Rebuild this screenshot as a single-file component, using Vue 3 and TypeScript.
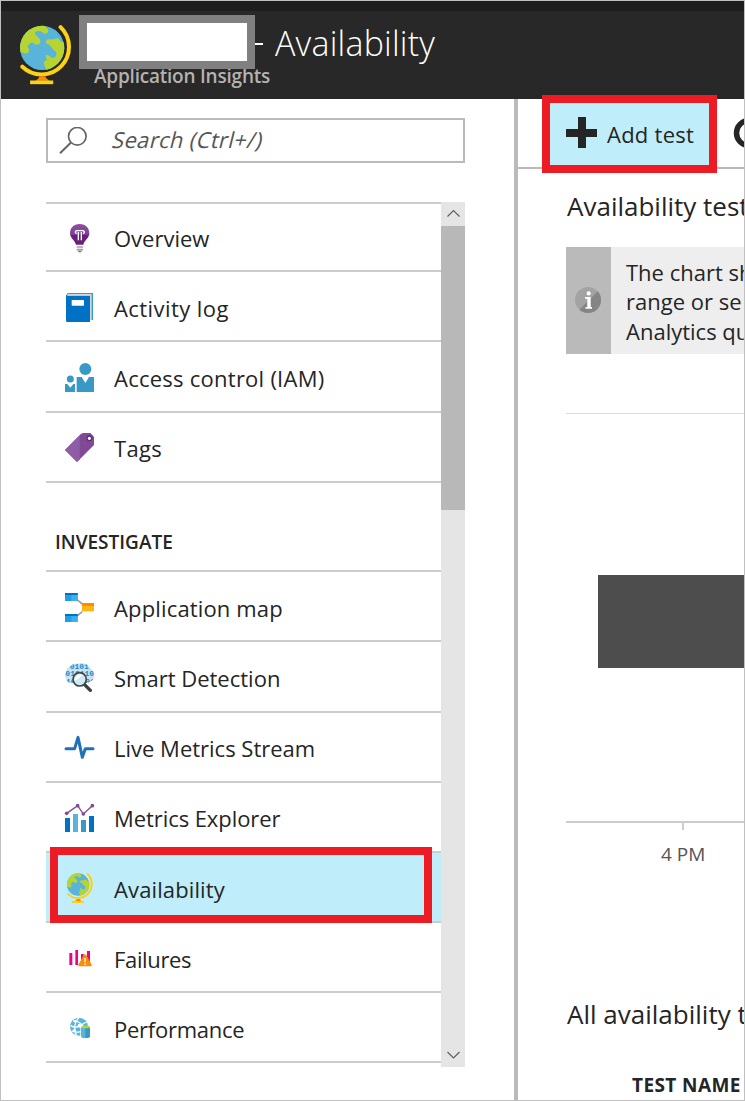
<script setup lang="ts">
interface Item {
  id: string
  label: string
  height: number
  top: number
  spacing: number
  active?: boolean
}

const general: Item[] = [
  { id: 'overview', label: 'Overview', height: 68, top: 19, spacing: 0 },
  { id: 'log', label: 'Activity log', height: 70, top: 21, spacing: 0.43 },
  { id: 'iam', label: 'Access control (IAM)', height: 71, top: 21, spacing: 0.25 },
  { id: 'tags', label: 'Tags', height: 70, top: 20, spacing: 0.3 },
]

const investigate: Item[] = [
  { id: 'map', label: 'Application map', height: 70, top: 21, spacing: 0.15 },
  { id: 'smart', label: 'Smart Detection', height: 71, top: 21, spacing: 0 },
  { id: 'live', label: 'Live Metrics Stream', height: 70, top: 20, spacing: 0 },
  { id: 'metrics', label: 'Metrics Explorer', height: 70, top: 20, spacing: -0.07 },
  { id: 'availability', label: 'Availability', height: 70, top: 21, spacing: 0.12, active: true },
  { id: 'failures', label: 'Failures', height: 70, top: 21, spacing: -0.35 },
  { id: 'performance', label: 'Performance', height: 70, top: 21, spacing: -0.25 },
]

const groups = [
  { title: '', items: general },
  { title: 'INVESTIGATE', items: investigate },
]
</script>

<template>
  <div class="window">
    <svg class="defs" width="0" height="0">
      <defs>
        <clipPath id="ball"><circle cx="126" cy="144" r="66" /></clipPath>
        <clipPath id="disc"><circle cx="13" cy="13" r="13" /></clipPath>
        <clipPath id="cloud"><path d="M17 9Q24-1 40 2q10-4 20 1 12 2 15 13 12 7 12 19 1 14-8 20-10 7-20 5H19Q5 60 3 47-3 37 3 26 5 14 17 9z" /></clipPath>
        <linearGradient id="bulb" x1="0" y1="0" x2="0" y2="1">
          <stop offset="0" stop-color="#8c4fa3" /><stop offset=".5" stop-color="#7f4196" /><stop offset=".55" stop-color="#68217a" /><stop offset="1" stop-color="#68217a" />
        </linearGradient>
        <symbol id="globe" viewBox="57 76 158 178">
          <circle cx="126" cy="144" r="66" fill="#59b4d9" />
          <g clip-path="url(#ball)" fill="#b8d432">
            <path d="M58 140 L58 75 H138 L136 81 Q146 88 144 96 Q140 105 131 101 L123 95 Q114 91 107 96 Q102 102 109 107 L118 116 Q123 123 119 130 Q112 138 104 132 L96 127 Q90 130 84 137 L82 140 Q89 148 86 156 Q81 163 72 160 L60 155Z" />
            <path d="M195 122 L185 127 Q180 124 176 117 Q170 113 162 118 H143 Q136 121 137 128 Q139 133 146 134 L158 147 L168 157 Q171 168 162 173 Q153 175 147 168 L141 164 Q134 167 138 174 L142 180 Q131 181 131 190 Q132 197 136 200 L139 220 L200 195Z" />
          </g>
          <path d="M181 82 A82 82 0 0 1 67 200" fill="none" stroke="#fcd116" stroke-width="12" stroke-linecap="round" />
          <path d="M118 228h17l4 7 9 7h-42l9-7z" fill="#ff8c00" />
          <path d="M90 241h69v11H90z" fill="#fcd116" />
        </symbol>
      </defs>
    </svg>

    <header class="header">
      <svg class="brand"><use href="#globe" /></svg>
      <div class="titles">
        <div class="title-row">
          <span class="redacted"></span>
          <span class="dash"></span>
          <h1>Availability</h1>
        </div>
        <p class="subtitle">Application Insights</p>
      </div>
    </header>

    <div class="body">
      <aside class="sidebar">
        <div class="search">
          <svg width="28" height="28" viewBox="0 0 28 28" fill="none" stroke="#666" stroke-width="1.7">
            <circle cx="18.3" cy="9.3" r="8.8" /><path d="M12 15.5 1 26.3" stroke-width="2" />
          </svg>
          <span>Search (Ctrl+/)</span>
        </div>

        <div class="menu">
          <nav class="list">
            <template v-for="group in groups" :key="group.title">
              <h2 v-if="group.title">{{ group.title }}</h2>
              <a
                v-for="item in group.items"
                :key="item.id"
                class="item"
                :class="{ active: item.active }"
                :style="{ height: item.height + 'px', paddingTop: item.top + 'px' }"
              >
                <svg class="icon" viewBox="0 0 90 90">
                  <g v-if="item.id === 'overview'">
                    <path d="M44 3C26 3 15 15 15 31c0 14 14 20 18 34h22c4-14 18-20 18-34C73 15 62 3 44 3z" fill="url(#bulb)" />
                    <path d="M40 52V27M49 52V27M35 32q-5-2-4-6 1-3 6-3h15q5 0 6 3 1 4-4 6" fill="none" stroke="#fff" stroke-width="4" />
                    <path d="M35 72h19M35 80h19" stroke="#a0a1a2" stroke-width="5" /><path d="M38 83h13l-3 5h-7z" fill="#7a7a7a" />
                  </g>
                  <g v-else-if="item.id === 'log'">
                    <path d="M8 0h76v81h-9V8H3z" fill="#3999c6" /><path d="M8 3h72v78h-5V8H6z" fill="#d5d6d8" />
                    <path d="M3 5q3 4 8 4h64v78H7q-4 0-4-4z" fill="#0072c6" /><rect x="20" y="21" width="37" height="17" rx="2" fill="#fff" />
                  </g>
                  <g v-else-if="item.id === 'iam'" fill="#3999c6">
                    <circle cx="61" cy="18" r="18" /><path d="M35 42h15l11 18 11-18h15v45H35z" />
                    <circle cx="16" cy="48" r="10.5" /><path d="M0 63h7l9 11 9-11h5v24H0z" />
                  </g>
                  <g v-else-if="item.id === 'tags'">
                    <path d="M0 51 47 4q4-4 10-4h19l11 11v25L36 87z" fill="#804998" /><path d="M0 51 44 7v72l-8 8z" fill="#8f5da5" />
                    <circle cx="73" cy="16" r="7" fill="#fff" stroke="#5b2d6e" stroke-width="4" />
                  </g>
                  <g v-else-if="item.id === 'map'">
                    <path d="m36 20 16 13M36 69l16-13" stroke="#a0a1a2" stroke-width="5" />
                    <path d="M0 0h38v24H0zM0 63h38v24H0z" fill="#1ba1e2" /><path d="M19 6h19v18H19zM19 70h19v17H19z" fill="#41afe6" />
                    <path d="M0 0h38v6H0zM0 63h38v6H0z" fill="#0072c6" /><path d="M51 30h36v25H51z" fill="#fdb515" /><path d="M51 30h36v9H51z" fill="#ff8c00" />
                  </g>
                  <g v-else-if="item.id === 'smart'">
                    <g clip-path="url(#cloud)">
                      <path d="M0 0h90v63H0z" fill="#c5e5f2" />
                      <g class="digits"><text x="14" y="17">0101</text><text x="1" y="40">010110</text><text x="3" y="63">101101</text></g>
                    </g>
                    <path d="m58 64 18 18" stroke="#3e3e3e" stroke-width="10" stroke-linecap="round" />
                    <circle cx="44" cy="49" r="20" fill="#cfe9f5" stroke="#464646" stroke-width="5" /><path d="M31 54A15 15 0 0 1 53 37z" fill="#fff" />
                  </g>
                  <path v-else-if="item.id === 'live'" d="M3 47h26L39 13l13 60 9-26h23" fill="none" stroke="#1f72b8" stroke-width="9" stroke-linecap="round" stroke-linejoin="round" />
                  <g v-else-if="item.id === 'metrics'">
                    <path d="M0 45h15v42H0zM72 39h15v48H72z" fill="#0072c6" /><path d="M24 33h15v54H24z" fill="#59b4d9" /><path d="M48 51h15v36H48z" fill="#3999c6" />
                    <path d="M5 31 38 8l17 25L82 8" fill="none" stroke="#804998" stroke-width="4" />
                    <g fill="#804998"><circle cx="5" cy="31" r="5.5" /><circle cx="38" cy="8" r="5.5" /><circle cx="55" cy="33" r="5.5" /><circle cx="82" cy="8" r="5.5" /></g>
                  </g>
                  <use v-else-if="item.id === 'availability'" href="#globe" x="4" y="-3" width="81" height="91" />
                  <g v-else-if="item.id === 'failures'">
                    <path d="M13 27h9v36h-9zM31 18h8v45h-8zM48 30h8v30h-8zM66 21h9v35h-9z" fill="#ec008c" />
                    <path d="M60 31q3 0 5 4l15 27q2 5-3 5H43q-5 0-3-5l15-27q2-4 5-4z" fill="#ff8c00" /><path d="M60 42v13M60 58v5" stroke="#fff" stroke-width="4" />
                  </g>
                  <g v-else>
                    <circle cx="42" cy="38" r="27" fill="#59b4d9" />
                    <path d="M17 35Q30 44 45 35T65 24M25 21q18-2 34 22M42 10Q21 33 34 64M20 51q24 9 47-5" fill="none" stroke="#fff" stroke-width="4" />
                    <circle cx="44" cy="35" r="6" fill="#fff" /><circle cx="28" cy="50" r="5" fill="#fff" /><circle cx="30" cy="22" r="4" fill="#fff" />
                    <path d="M46 36h31v38H50l-4-5z" fill="#fff" /><path d="M49 40h26v28q-1 4-13 4t-13-4z" fill="#3999c6" /><path d="M49 42h12v30q-11 0-12-4z" fill="#59b4d9" />
                    <ellipse cx="62" cy="39" rx="13" ry="4" fill="#b8d432" />
                  </g>
                </svg>
                <span class="label" :style="{ letterSpacing: item.spacing + 'px' }">{{ item.label }}</span>
                <i v-if="item.active" class="highlight"></i>
              </a>
            </template>
          </nav>
          <div class="scrollbar">
            <svg width="24" height="24" fill="none" stroke="#5e5e5e" stroke-width="1.2"><path d="m6.5 14.5 6-6 6 6" /></svg>
            <div class="thumb"></div>
            <svg width="24" height="24" fill="none" stroke="#5e5e5e" stroke-width="1.2"><path d="m6.5 9 6 6 6-6" /></svg>
          </div>
        </div>
      </aside>

      <main class="content">
        <div class="toolbar">
          <button class="add">
            <svg width="31" height="31" fill="#252525"><path d="M12 0h8v12h11v8H20v11h-8V20H0v-8h12z" /></svg>
            <span>Add test</span>
          </button>
          <svg class="refresh" width="31" height="34" fill="none" stroke="#252525" stroke-width="5.5"><circle cx="16" cy="17" r="12.5" /></svg>
        </div>
        <section class="panel">
          <h3 class="chart-title">Availability test</h3>
          <div class="info">
            <div class="info-mark">
              <svg width="26" height="26" viewBox="0 0 26 26">
                <g clip-path="url(#disc)"><path d="M0 0h26v26H0z" fill="#a3a3a3" /><path d="M26 1v25H1z" fill="#858585" /></g>
                <circle cx="13.7" cy="6.4" r="2.1" fill="#fff" /><path d="M10 10h5.7v10H17v1.8h-6.5V20h1.8v-8.3H10z" fill="#fff" />
              </svg>
            </div>
            <p>The chart sh<br />range or se<br />Analytics qu</p>
          </div>
          <div class="chart">
            <div class="bar"></div>
            <div class="axis"><i></i></div>
            <span class="tick-label">4 PM</span>
          </div>
          <h3 class="table-title">All availability t</h3>
          <div class="column">TEST NAME</div>
        </section>
      </main>
    </div>
  </div>
</template>

<style>
body { margin: 0; }
</style>

<style scoped>
* { box-sizing: border-box; }
.window {
  position: relative; width: 745px; height: 1101px; overflow: hidden;
  border: 1px solid #c0c0c0; background: #fff; color: #252525;
  font-family: "Open Sans", "Noto Sans", sans-serif; font-size: 22px;
}
.defs { position: absolute; }
h1, h2, h3, p { margin: 0; font-weight: 400; }
.header { display: flex; height: 98px; border-top: 10px solid #1d1d1d; background: #282828; }
.brand { width: 53px; height: 60px; margin: 14px 7px 0 18px; }
.titles { padding-top: 4px; }
.title-row { display: flex; position: relative; z-index: 1; height: 54px; }
.redacted { width: 176px; border: 8px solid #808080; background: #fff; }
.dash { width: 8px; height: 2px; margin: 28px 12px 0 0; background: #fff; }
h1 { height: 54px; line-height: 56px; font-size: 34px; font-weight: 300; letter-spacing: 0.2px; color: #fff; white-space: nowrap; }
.subtitle { margin: -8px 0 0 15px; line-height: 30px; font-size: 19px; font-weight: 600; letter-spacing: -0.22px; color: #b3b3b3; white-space: nowrap; }
.body { display: flex; height: 1001px; }
.sidebar { width: 517px; flex: none; padding: 19px 0 0 45px; border-right: 4px solid #bababa; }
.search { display: flex; align-items: center; width: 419px; height: 45px; padding-left: 11px; border: 2px solid #bababa; color: #555; white-space: nowrap; }
.search span { margin: -3px 0 0 26px; letter-spacing: 0.33px; transform: skewX(-14deg); }
.menu { display: flex; width: 419px; height: 865px; margin-top: 39px; }
.list { width: 395px; border-top: 2px solid #ccc; }
.list h2 { height: 89px; padding: 44px 0 0 9px; border-bottom: 2px solid #ccc; line-height: 30px; font-size: 19px; font-weight: 600; }
.item { display: flex; align-items: flex-start; position: relative; padding-left: 19px; border-bottom: 2px solid #ccc; }
.icon { width: 30px; height: 30px; flex: none; overflow: visible; }
.label { margin-left: 19px; line-height: 30px; white-space: nowrap; }
.active { background: #bfeefa; }
.highlight { position: absolute; left: 4px; top: -6px; width: 382px; height: 76px; border: 8px solid #ed1c24; }
.digits { font: bold 24px "Liberation Mono", monospace; fill: #2589c4; }
.scrollbar { display: flex; flex-direction: column; width: 24px; background: #e5e5e5; }
.scrollbar svg:last-child { margin-top: auto; }
.thumb { height: 284px; background: #b8b8b8; }
.content { flex: 1; min-width: 0; }
.toolbar { display: flex; height: 70px; border-bottom: 2px solid #bababa; }
.add {
  display: flex; flex: none; align-items: center; position: relative; width: 175px; height: 78px; margin: -4px 0 0 24px; padding: 0 0 0 16px;
  border: 8px solid #ed1c24; background: #bfeefa; color: #252525; font: inherit; white-space: nowrap;
}
.add svg { margin-top: -4px; }
.add span { margin-left: 10px; letter-spacing: 0.25px; }
.refresh { flex: none; margin: 17px 0 0 16px; }
.panel { padding-left: 48px; white-space: nowrap; }
.chart-title { height: 78px; padding: 17px 0 0 1px; line-height: 40px; font-size: 26px; }
.info { display: flex; height: 107px; background: #eee; }
.info-mark { display: flex; align-items: center; justify-content: center; width: 45px; flex: none; padding: 0 1px 1px 0; background: #bababa; }
.info p { padding: 11px 0 0 15px; line-height: 29.4px; }
.chart { display: flex; flex-direction: column; margin-top: 59px; height: 581px; border-top: 1px solid #ddd; }
.bar { flex: none; height: 93px; margin: 161px 0 0 32px; background: #4d4d4d; }
.axis { margin-top: 153px; border-top: 2px solid #ccc; height: 9px; }
.axis i { display: block; width: 2px; height: 7px; margin-left: 116px; background: #ccc; }
.tick-label { margin: 9px 0 0 95px; line-height: 30px; font-size: 19px; color: #555; }
.table-title { padding-left: 1px; line-height: 40px; font-size: 26px; }
.column { margin: 36px 0 0 66px; line-height: 30px; font-size: 19px; font-weight: 700; letter-spacing: 0.4px; }
</style>
